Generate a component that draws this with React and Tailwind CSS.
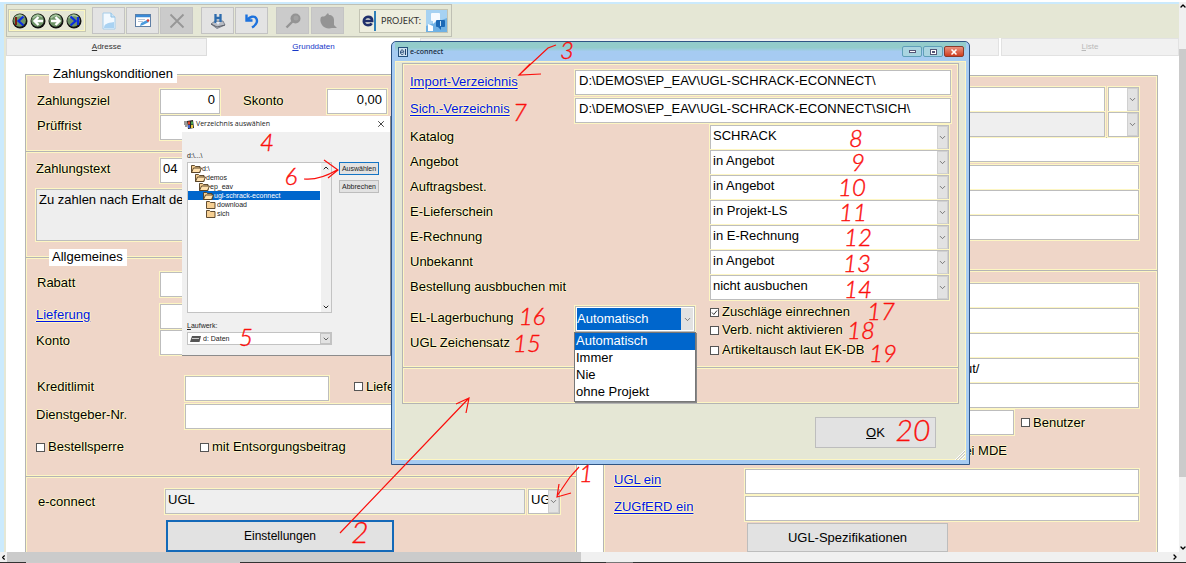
import React, { useState } from "react";
import { X, ChevronDown, ChevronUp, ChevronLeft, ChevronRight } from "lucide-react";

const halo = "[text-shadow:1px_0_#fcf3c4,-1px_0_#fcf3c4,0_1px_#fcf3c4,0_-1px_#fcf3c4]"
const fieldBox = "border border-[#bdbdbd] shadow-[0_0_0_1px_#fdf6c3] outline-none"
const groupBox = "border border-[#b4b4b4] bg-[#efd6c8] shadow-[inset_0_0_0_1px_#fdf6c3]"

const Field = ({ className = "", gray, ...rest }) => (
  <input
    className={`block h-[25px] min-w-0 px-1 pb-1 text-[13px] leading-5 text-black ${fieldBox} ${gray ? "bg-[#efefef]" : "bg-white"} ${className}`}
    {...rest}
  />
)

const Combo = ({ id, label, options, className = "" }) => (
  <div className={`flex h-[25px] bg-white ${fieldBox} ${className}`}>
    <select id={id} aria-label={label} className="min-w-0 flex-1 appearance-none bg-white pb-1 pl-[2px] text-[13px] leading-5 outline-none">
      {options.map((o) => <option key={o}>{o}</option>)}
    </select>
    <span className="flex w-[11px] shrink-0 items-center justify-center border border-[#d0d0d0] bg-[#e2e2e2]">
      <ChevronDown className="size-[9px] text-[#555]" />
    </span>
  </div>
)

const Check = ({ label, defaultChecked = false, className = "" }) => {
  const [on, setOn] = useState(defaultChecked)
  return (
    <label className={`flex items-center gap-[3px] whitespace-nowrap ${halo} ${className}`}>
      <span className="grid size-[9px] shrink-0">
        <input
          type="checkbox"
          checked={on}
          onChange={() => setOn(!on)}
          className="col-start-1 row-start-1 size-[9px] appearance-none border border-[#555] bg-white"
        />
        {on && (
          <svg viewBox="0 0 9 9" className="pointer-events-none col-start-1 row-start-1 size-[9px]">
            <path d="M2 4.5l1.8 2L7 2.5" fill="none" stroke="#333" />
          </svg>
        )}
      </span>
      {label}
    </label>
  )
}

const TextLink = ({ children, className = "" }) => (
  <a href="#" className={`text-[#0014e6] underline underline-offset-2 ${halo} ${className}`}>{children}</a>
)

const NavButton = ({ label, children }) => (
  <button aria-label={label} className="size-4">
    <svg viewBox="0 0 16 16" className="size-4">
      <circle cx="8" cy="8" r="7.5" fill="#111" />
      <circle cx="7.6" cy="7.4" r="6.3" fill="#6f9468" />
      <path d="M3 5a6 6 0 0 1 9-1" stroke="#a9c6a2" strokeWidth="1.5" fill="none" />
      {children}
    </svg>
  </button>
)

const ToolButton = ({ label, disabled, children }) => (
  <button
    aria-label={label}
    disabled={disabled}
    className={`flex h-[27px] w-[33px] items-center justify-center border ${disabled ? "border-[#c4c4c4] bg-[#cbcbcb]" : "border-[#c3c3c3] bg-[#e3e3e3]"}`}
  >
    {children}
  </button>
)

const Toolbar = () => (
  <div className="flex h-[34px] shrink-0 bg-[#e5e7d5]">
    <div className="flex h-[33px] items-center border border-[#bfc0b4] pr-[3px] pl-px">
      <div className="flex h-[23px] w-[78px] items-center justify-center gap-[2px] border border-[#c6c7b5] shadow-[inset_0_0_0_1px_#fbf7c0]">
        <NavButton label="Erster">
          <path d="M4 4v8" stroke="#7c1d12" strokeWidth="2" />
          <path d="M11.500 3.500L6.500 8l5 4.500" stroke="#0a2be0" strokeWidth="2.200" fill="none" />
        </NavButton>
        <NavButton label="Zurück">
          <path d="M13 8H5M8.500 4L4.500 8l4 4" stroke="#fff" strokeWidth="2.400" fill="none" />
        </NavButton>
        <NavButton label="Weiter">
          <path d="M3 8h8M7.500 4l4 4-4 4" stroke="#fff" strokeWidth="2.400" fill="none" />
        </NavButton>
        <NavButton label="Letzter">
          <path d="M12 4v8M4.500 3.500l5 4.500-5 4.500" stroke="#0a2be0" strokeWidth="2.200" fill="none" />
        </NavButton>
      </div>
      <div className="ml-[6px] flex gap-px">
        <ToolButton label="Neu">
          <svg viewBox="0 0 14 18" className="h-[18px] w-[14px]">
            <path d="M1 1h8l4 4v12H1z" fill="#f2f9ff" stroke="#a5cdea" />
            <path d="M9 1v4h4" fill="#cde6f8" stroke="#8dbfe3" />
            <path d="M2 16c0-4 3-5 10-6v6z" fill="#a9d2f2" />
          </svg>
        </ToolButton>
        <ToolButton label="Bearbeiten">
          <svg viewBox="0 0 16 14" className="h-[14px] w-4">
            <rect x=".5" y=".5" width="15" height="12" fill="#fff" stroke="#5f7fa5" />
            <path d="M1 2h14" stroke="#3a8ad6" strokeWidth="2.500" />
            <path d="M3 5.500h7M3 7.500h5" stroke="#b9c6d6" />
            <path d="M5 12l1-3 6-3 2 2-6 3z" fill="#4a9bdd" />
            <circle cx="13" cy="6.500" r="1.300" fill="#d8453c" />
          </svg>
        </ToolButton>
        <ToolButton label="Löschen" disabled>
          <svg viewBox="0 0 16 16" className="size-4">
            <path d="M1.500 1.500l13 13M14.500 1.500l-13 13" stroke="#979797" strokeWidth="1.800" />
          </svg>
        </ToolButton>
      </div>
      <div className="ml-[8px] flex gap-px">
        <ToolButton label="Speichern">
          <svg viewBox="0 0 16 16" className="size-4">
            <path d="M1 11l4-3h8l2 4-8 3.500z" fill="#b8bcc4" stroke="#6d7480" strokeWidth=".8" />
            <path d="M1 11l6 3 8-2" stroke="#5c6068" fill="none" />
            <path d="M5.500 1v9M10.500 1v8M5.500 5h5" stroke="#2d6cae" strokeWidth="2.300" />
            <path d="M6 9h4l-2 3z" fill="#e8eef6" />
          </svg>
        </ToolButton>
        <ToolButton label="Rückgängig">
          <svg viewBox="0 0 16 16" className="size-4">
            <path d="M2.500 1.500v6h6M3 7c3-3.500 7-4.500 9-2s1 6.500-4 9.500" fill="none" stroke="#1d72dd" strokeWidth="2.400" />
          </svg>
        </ToolButton>
      </div>
      <div className="ml-[8px] flex gap-[2px]">
        <ToolButton label="Suchen" disabled>
          <svg viewBox="0 0 16 16" className="size-4">
            <circle cx="10.500" cy="5.500" r="5" fill="#949494" />
            <path d="M7.500 8.500L1.500 14.500" stroke="#949494" strokeWidth="2.400" />
            <circle cx="11" cy="5" r="2.500" fill="#a2a2a2" />
          </svg>
        </ToolButton>
        <ToolButton label="Auswertung" disabled>
          <svg viewBox="0 0 18 16" className="h-4 w-[18px]">
            <path d="M2 4c2-1 4 0 5-2l2-2 1 2c3 0 5 2 5 5v5l3 3h-5c-4 1-8 0-10-3C1 9 1 6 2 4z" fill="#949494" />
          </svg>
        </ToolButton>
      </div>
      <div className="ml-[15px] flex h-6 items-center border border-[#c3c4b4] bg-[#eeeedf] pl-[2px]">
        <svg viewBox="0 0 13 13" className="size-[12px]">
          <path d="M2 6.500h9C11 3.500 9 2 6.500 2S2 4 2 6.700 4 11 6.500 11c2 0 3.300-.6 4-2" fill="none" stroke="#1f2f6c" strokeWidth="2.900" />
        </svg>
        <span className="h-5 border-l-2 border-[#2f7fb8]" />
        <span className="w-[50px] text-center font-['Lato'] text-[9px] text-[#333]">PROJEKT:</span>
        <svg viewBox="0 0 21 22" className="h-[22px] w-[21px]">
          <rect width="21" height="22" fill="#6fb1e4" />
          <path d="M0 0h21v8L0 16z" fill="#a6d2f2" />
          <rect x="5" y="3" width="9" height="8" rx="1" fill="#f6fbff" />
          <path d="M7 11v3l3-3z" fill="#f6fbff" />
          <rect x="10" y="10" width="9" height="7" rx="1" fill="#1c69b5" />
          <path d="M15 17v3l-3-3z" fill="#1c69b5" />
          <path d="M14.500 11v5" stroke="#bfe0f7" />
          <path d="M2 14l5 2v5H2z" fill="#fff" />
        </svg>
      </div>
    </div>
  </div>
)

const Tabs = () => (
  <div className="grid h-4 shrink-0 grid-cols-[201px_213px_1fr_178px] text-[8px] leading-4">
    <button className="border border-[#dcdcdc] bg-[#f1f1f1] text-[#333]"><u>A</u>dresse</button>
    <button className="bg-white text-[#1738c8]"><u>G</u>runddaten</button>
    <div className="mr-[2px] border border-[#e2e2e2] bg-[#f1f1f1]" />
    <button className="border border-[#e2e2e2] bg-[#f1f1f1] text-[#b9b9b9]"><u>L</u>iste</button>
  </div>
)

const PaymentPanel = () => (
  <div className="min-w-0">
    <fieldset className={`h-[86px] px-[10px] pt-[6px] ${groupBox}`}>
      <legend className="ml-[13px] h-[17px] bg-white px-1 leading-4">Zahlungskonditionen</legend>
      <div className="mb-px flex items-center">
        <label htmlFor="ziel" className={`w-[124px] pb-px pl-px ${halo}`}>Zahlungsziel</label>
        <Field id="ziel" defaultValue="0" className="w-[60px] text-right" />
        <label htmlFor="skonto" className={`ml-[23px] w-[84px] pb-px ${halo}`}>Skonto</label>
        <Field id="skonto" defaultValue="0,00" className="w-[60px] text-right" />
      </div>
      <div className="flex items-center">
        <label htmlFor="frist" className={`w-[124px] pb-1 pl-px ${halo}`}>Prüffrist</label>
        <Field id="frist" className="w-[60px]" />
      </div>
    </fieldset>

    <div className={`h-[106px] border-t-0 px-[10px] pt-[6px] ${groupBox}`}>
      <div className="flex items-center">
        <label htmlFor="ztext" className={`w-[124px] pb-1 ${halo}`}>Zahlungstext</label>
        <Field id="ztext" defaultValue="04" className="w-[60px] pl-[2px]" />
      </div>
      <textarea
        aria-label="Zahlungstext lang"
        readOnly
        defaultValue="Zu zahlen nach Erhalt de"
        className={`mt-[6px] block h-[52px] w-full resize-none bg-[#eeeeee] px-[2px] text-[13px] leading-5 ${fieldBox}`}
      />
    </div>

    <fieldset className={`-mt-[9px] h-[228px] px-[10px] pt-[6px] ${groupBox}`}>
      <legend className="ml-[13px] h-[17px] w-[78px] bg-white px-[3px] leading-4">Allgemeines</legend>
      <div className="mb-[7px] flex items-center">
        <label htmlFor="rabatt" className={`w-[124px] pb-1 pl-px ${halo}`}>Rabatt</label>
        <Field id="rabatt" className="w-[60px]" />
      </div>
      <div className="mb-px flex items-center">
        <span className="w-[124px] pb-1"><TextLink>Lieferung</TextLink></span>
        <Field aria-label="Lieferung" className="w-[60px]" />
      </div>
      <div className="flex items-center">
        <label htmlFor="konto" className={`w-[124px] pb-1 ${halo}`}>Konto</label>
        <Field id="konto" className="w-[60px]" />
      </div>
      <div className="mt-[21px] flex items-center">
        <label htmlFor="limit" className={`w-[149px] pb-1 pl-px ${halo}`}>Kreditlimit</label>
        <Field id="limit" className="w-[144px]" />
        <Check label="Liefe" className="ml-[25px] pb-1" />
      </div>
      <div className="mt-[3px] flex items-center">
        <label htmlFor="dg" className={`w-[149px] pb-1 ${halo}`}>Dienstgeber-Nr.</label>
        <Field id="dg" className="flex-1" />
      </div>
      <div className="mt-[10px] flex">
        <Check label="Bestellsperre" className="w-[164px]" />
        <Check label="mit Entsorgungsbeitrag" />
      </div>
    </fieldset>

    <div className={`h-[120px] border-t-0 px-[12px] pt-[12px] ${groupBox}`}>
      <div className="flex items-center">
        <label htmlFor="econnect" className={`w-[127px] shrink-0 ${halo}`}>e-connect</label>
        <Field id="econnect" readOnly gray defaultValue="UGL" className="flex-1 px-[2px]" />
        <Combo label="Format" options={["UGL"]} className="mr-1 ml-[3px] w-[32px]" />
      </div>
      <button className="mt-[6px] ml-[128px] h-[32px] w-[228px] border-2 border-[#1469b8] bg-[#e2e2e2] text-[12px]">Einstellungen</button>
    </div>
  </div>
)

const AddressPanel = () => (
  <div className="min-w-0 pt-[9px]">
    <div className={`h-[196px] pt-[11px] pr-[18px] pl-[141px] ${groupBox}`}>
      <div className="flex gap-[3px]">
        <Field aria-label="Feld 1" className="flex-1" />
        <Combo label="Typ 1" options={[""]} className="w-[31px]" />
      </div>
      <div className="flex gap-[3px]">
        <Field aria-label="Feld 2" gray readOnly className="flex-1" />
        <Combo label="Typ 2" options={[""]} className="w-[31px]" />
      </div>
      <Field aria-label="Feld 3" className="mb-[3px] w-full" />
      <Field aria-label="Feld 4" className="w-full" />
      <Field aria-label="Feld 5" className="w-full" />
      <Field aria-label="Feld 6" className="w-full" />
    </div>
    <div className={`h-[310px] border-t-0 pt-[12px] pr-[18px] pl-[10px] ${groupBox}`}>
      <div className="pl-[131px]">
        <Field aria-label="Feld 7" className="w-full" />
        <Field aria-label="Feld 8" className="w-full" />
        <Field aria-label="Feld 9" className="w-full" />
        <Field aria-label="Feld 10" defaultValue="ut/" className="w-full pl-[219px]" />
        <Field aria-label="Feld 11" className="w-full" />
        <div className="mt-[2px] flex items-center">
          <Field aria-label="Feld 12" className="w-[269px]" />
          <Check label="Benutzer" className="ml-[7px]" />
        </div>
        <div className={`mt-[6px] h-5 w-[262px] text-right leading-5 ${halo}`}>ei MDE</div>
      </div>
      <div className="mt-2 flex items-center">
        <span className="w-[131px] pb-1"><TextLink>UGL ein</TextLink></span>
        <Field aria-label="UGL ein" className="flex-1" />
      </div>
      <div className="mt-[2px] flex items-center">
        <span className="w-[131px] pb-1"><TextLink>ZUGfERD ein</TextLink></span>
        <Field aria-label="ZUGfERD ein" className="flex-1" />
      </div>
      <button className="mt-[2px] ml-[133px] h-[29px] w-[201px] border border-[#bdbdbd] bg-[#e2e2e2]">UGL-Spezifikationen</button>
    </div>
  </div>
)

const targets = [
  ["Katalog", "SCHRACK"],
  ["Angebot", "in Angebot"],
  ["Auftragsbest.", "in Angebot"],
  ["E-Lieferschein", "in Projekt-LS"],
  ["E-Rechnung", "in E-Rechnung"],
  ["Unbekannt", "in Angebot"],
  ["Bestellung ausbbuchen mit", "nicht ausbuchen"],
]

const bookingModes = ["Automatisch", "Immer", "Nie", "ohne Projekt"]

const EConnectDialog = () => (
  <div role="dialog" aria-label="e-connect" className="absolute top-[41px] left-[391px] w-[579px] rounded-t-[5px] border border-[#2f5585] bg-[#a6cbf2] px-[3px] pb-[4px]">
    <div className="flex h-[19px] items-center bg-linear-to-b from-[#93cccb] from-30% to-[#a6cbf2] to-50% pl-[3px]">
      <svg viewBox="0 0 10 10" className="size-[10px]">
        <rect x=".5" y=".5" width="9" height="9" fill="#cfe0ee" stroke="#24507c" />
        <path d="M2.500 5.200h3.200c0-3-3.200-3-3.200 0s2.500 2.600 3.200 1.500M7.500 2v6" fill="none" stroke="#1f4370" />
      </svg>
      <span className="ml-[2px] font-['Open_Sans'] text-[7px] font-semibold text-[#1d2f45]">e-connect</span>
      <div className="mr-[2px] ml-auto flex gap-px">
        <button aria-label="Minimieren" className="flex h-[11px] w-5 items-center justify-center rounded-[2px] border border-[#5f9fb8] bg-[#a9d4e0]">
          <span className="h-[3px] w-[7px] border border-[#557] bg-white" />
        </button>
        <button aria-label="Maximieren" className="flex h-[11px] w-5 items-center justify-center rounded-[2px] border border-[#5f9fb8] bg-[#a9d4e0]">
          <span className="flex h-[6px] w-[7px] items-center justify-center border border-[#557] bg-white">
            <span className="h-[2px] w-[3px] bg-[#557]" />
          </span>
        </button>
        <button aria-label="Schließen" className="flex h-[11px] w-5 items-center justify-center rounded-[2px] border border-[#8a3a2c] bg-linear-to-b from-[#e9907c] to-[#cf3a1c]">
          <X className="size-[8px] text-white" strokeWidth={5} />
        </button>
      </div>
    </div>

    <div className="border border-[#fdf6c3] bg-[#e5e7d5] px-[6px] pt-px">
      <div className={`h-[305px] pt-[6px] pr-[7px] pl-[7px] ${groupBox}`}>
        <div className="flex items-center">
          <span className="w-[165px] pb-[2px]"><TextLink>Import-Verzeichnis</TextLink></span>
          <Field aria-label="Import-Verzeichnis" className="flex-1 px-[3px]" defaultValue="D:\DEMOS\EP_EAV\UGL-SCHRACK-ECONNECT\" />
        </div>
        <div className="mt-[3px] mb-[2px] flex items-center">
          <span className="w-[165px] pb-1"><TextLink>Sich.-Verzeichnis</TextLink></span>
          <Field aria-label="Sich.-Verzeichnis" className="flex-1 px-[3px]" defaultValue="D:\DEMOS\EP_EAV\UGL-SCHRACK-ECONNECT\SICH\" />
        </div>
        {targets.map(([name, value], i) => (
          <div key={name} className="flex items-center">
            <label htmlFor={`t${i}`} className={`w-[300px] pb-[2px] ${halo}`}>{name}</label>
            <Combo id={`t${i}`} options={[value]} className="mr-[2px] flex-1" />
          </div>
        ))}
        <div className="grid grid-cols-[165px_135px_1fr] pt-[3px]">
          <div className="flex flex-col gap-[5px] pt-[5px] leading-5">
            <label htmlFor="lager" className={halo}>EL-Lagerbuchung</label>
            <span className={halo}>UGL Zeichensatz</span>
          </div>
          <div className="relative w-[120px] pt-[3px]">
            <div className={`flex h-[26px] bg-white p-px ${fieldBox}`}>
              <select id="lager" className="min-w-0 flex-1 appearance-none bg-[#0066cc] text-[13px] text-white outline-none">
                {bookingModes.map((m) => <option key={m}>{m}</option>)}
              </select>
              <span className="flex w-[12px] items-center justify-center bg-[#e2e2e2]">
                <ChevronDown className="size-[9px] text-[#555]" />
              </span>
            </div>
            <ul role="listbox" className="absolute top-[29px] -left-px z-10 w-[122px] border border-[#777] bg-white shadow-[1px_1px_0_#888]">
              {bookingModes.map((m, i) => (
                <li
                  key={m}
                  role="option"
                  aria-selected={i === 0}
                  className={`h-[17px] px-px leading-4 ${i === 0 ? "bg-[#0066cc] text-white" : ""}`}
                >
                  {m}
                </li>
              ))}
            </ul>
          </div>
          <div className="flex flex-col gap-[2px] pt-px leading-4">
            <Check label="Zuschläge einrechnen" defaultChecked />
            <Check label="Verb. nicht aktivieren" />
            <Check label="Artikeltausch laut EK-DB" className="pt-[2px]" />
          </div>
        </div>
      </div>
      <div className={`h-[36px] border-t-0 ${groupBox}`} />
      <div className="flex h-[55px] items-start justify-end pt-[13px] pr-[23px]">
        <button className="h-[31px] w-[121px] border border-[#bdbdbd] bg-[#e2e2e2]"><u>O</u>K</button>
      </div>
    </div>
    <svg viewBox="0 0 10 10" className="absolute right-[4px] bottom-[4px] size-[10px]">
      <path d="M0 10L10 0M3 10l7-7M6 10l4-4" stroke="#fff" />
      <path d="M1 10l9-9M4 10l6-6" stroke="#b4b4b4" strokeWidth=".6" />
    </svg>
  </div>
)

const Folder = ({ open }) => (
  <svg viewBox="0 0 11 9" className="h-[9px] w-[11px] shrink-0">
    <path d="M.5 8.500v-7h3l1 1h4.500v6z" fill="#f6cf92" stroke="#4f3b20" strokeWidth=".9" />
    {open && <path d="M.5 8.500l2-4.500h8l-2 4.500z" fill="#ffe0ac" stroke="#4f3b20" strokeWidth=".9" />}
  </svg>
)

const folders = [
  { name: "d:\\", indent: "pl-[3px]", open: true },
  { name: "demos", indent: "pl-[7px]", open: true },
  { name: "ep_eav", indent: "pl-[11px]", open: true },
  { name: "ugl-schrack-econnect", indent: "pl-[15px]", open: true, selected: true },
  { name: "download", indent: "pl-[18px]" },
  { name: "sich", indent: "pl-[18px]" },
]

const FolderDialog = () => (
  <div role="dialog" aria-label="Verzeichnis auswählen" className="absolute top-[116px] left-[182px] h-[240px] w-[209px] border-r border-b border-[#8c8c8c] bg-[#f0f0f0] text-[7px] text-[#222]">
    <div className="flex h-4 items-center bg-white pl-[2px]">
      <svg viewBox="0 0 10 9" className="h-[9px] w-[10px]">
        <path d="M3 1l6-1 1 8-6 1z" fill="#222" />
        <path d="M4 1.500h2v3H4z" fill="#e0452d" />
        <path d="M7 1.500h2v3H7z" fill="#49a24c" />
        <path d="M4 5h2v3H4z" fill="#3f63d0" />
        <path d="M7 5h2v3H7z" fill="#e8c53a" />
        <path d="M0 2h3M0 4h3M1 6h2" stroke="#333" />
      </svg>
      <span className="ml-[2px] font-['Open_Sans']">Verzeichnis auswählen</span>
      <button aria-label="Schließen" className="mr-[4px] ml-auto"><X className="size-[10px]" strokeWidth={2} /></button>
    </div>
    <div className="px-[5px] pt-[19px]">
      <div className="h-[11px] leading-[10px]">d:\...\</div>
      <div className="flex">
        <div className="flex h-[151px] w-[145px] justify-between border border-[#c3c3c3] bg-white">
          <ul className="w-[132px] pt-px">
            {folders.map((f) => (
              <li key={f.name} className={`flex h-[9px] items-center leading-[9px] ${f.indent} ${f.selected ? "bg-[#0066cc] text-white" : ""}`}>
                <Folder open={f.open} />
                {f.name}
              </li>
            ))}
          </ul>
          <div className="flex w-[10px] flex-col items-center justify-between bg-[#f0f0f0] py-px">
            <ChevronUp className="size-[8px]" strokeWidth={3} />
            <ChevronDown className="size-[8px]" strokeWidth={3} />
          </div>
        </div>
        <div className="ml-[7px] flex flex-col gap-[5px]">
          <button className="h-[13px] w-[40px] border border-[#1474c4] bg-[#e2e2e2] leading-[10px]">Auswählen</button>
          <button className="h-[13px] w-[40px] border border-[#bdbdbd] bg-[#e2e2e2] leading-[10px]">Abbrechen</button>
        </div>
      </div>
      <label htmlFor="drive" className="mt-[8px] block h-[11px] leading-[10px]"><u>L</u>aufwerk:</label>
      <div className="flex h-[13px] w-[145px] items-center border border-[#c3c3c3] bg-white pl-[2px]">
        <svg viewBox="0 0 11 6" className="h-[6px] w-[11px]">
          <path d="M2 0h9L9.500 6H0z" fill="#555" />
          <path d="M2 2.500h7" stroke="#ccc" />
        </svg>
        <select id="drive" className="ml-[2px] min-w-0 flex-1 appearance-none text-[7px] outline-none">
          <option>d: Daten</option>
        </select>
        <span className="flex h-full w-[11px] items-center justify-center border border-[#c3c3c3] bg-[#e2e2e2]">
          <ChevronDown className="size-[8px]" />
        </span>
      </div>
    </div>
  </div>
)

// step numbers of the walkthrough: text, centre x, centre y
const marks = [
  ["1", 586, 474], ["3", 567, 51], ["4", 267, 143], ["5", 246, 338], ["6", 291, 177],
  ["7", 520, 113], ["8", 856, 139], ["9", 858, 163], ["10", 852, 188], ["11", 853, 213],
  ["12", 858, 238], ["13", 857, 264], ["14", 858, 290], ["15", 527, 344], ["16", 532, 317],
  ["17", 881, 312], ["18", 861, 331], ["19", 883, 354],
]

const Marks = () => (
  <svg className="pointer-events-none absolute inset-0 size-full font-['Lato'] font-light italic" fill="#fb0f0c">
    <g fill="none" stroke="#fb0f0c" strokeWidth="1.200">
      <path d="M556 45l-8 3-29 27M530 64l-11 11 22-1" />
      <path d="M304 179c9 1 21-2 33-9M324 160l14 10-10 8" />
      <path d="M340 533l129-135M456 404l13-6-3 15" />
      <path d="M579 467l-9 10-13 19M559 484l-2 13 14-4" />
    </g>
    <g className="text-[24px]" textAnchor="middle" stroke="#fb0f0c" strokeWidth=".4">
      {marks.map(([n, x, y]) => <text key={n} x={x} y={y + 8}>{n}</text>)}
    </g>
    <g className="text-[30px]" textAnchor="middle" stroke="#fb0f0c" strokeWidth=".3">
      <text x="360" y="543">2</text>
      <text x="913" y="441">20</text>
    </g>
  </svg>
)

const App = () => {
  return (
    <div className="relative flex h-screen flex-col overflow-hidden bg-white font-['Liberation_Sans',Arial,sans-serif] text-[13px] leading-4 text-black">
      <div className="flex min-h-0 flex-1 pt-[2px]">
        <div className="flex min-w-0 flex-1 flex-col border-t-2 border-l-4 border-[#cbeafd]">
          <div className="flex min-h-0 flex-1 flex-col border-l-2 border-[#e5e7d5]">
            <Toolbar />
            <Tabs />
            <div className="grid min-h-0 flex-1 grid-cols-[552fr_555fr] items-start gap-[26px] overflow-hidden pt-[12px] pr-[21px] pl-[19px]">
              <PaymentPanel />
              <AddressPanel />
            </div>
          </div>
        </div>
        <div className="flex w-[7px] flex-col items-center bg-[#f0f0f0]">
          <ChevronUp className="size-[8px]" strokeWidth={4} />
          <div className="mt-[39px] h-[428px] w-full bg-[#cbcbcb]" />
          <ChevronDown className="mt-auto size-[8px]" strokeWidth={4} />
        </div>
      </div>
      <div className="flex h-[10px] shrink-0 items-center bg-[#f0f0f0]">
        <ChevronLeft className="size-[7px]" strokeWidth={4} />
        <div className="h-full w-[574px] bg-[#cbcbcb]" />
        <ChevronRight className="mr-[7px] ml-auto size-[8px]" strokeWidth={4} />
      </div>
      <div className="flex h-px shrink-0 bg-[#333]">
        <div className="ml-[26px] w-[214px] bg-[#ccc]" />
        <div className="ml-[366px] w-[27px] bg-[#777]" />
      </div>
      <FolderDialog />
      <EConnectDialog />
      <Marks />
    </div>
  )
}

export default App;
